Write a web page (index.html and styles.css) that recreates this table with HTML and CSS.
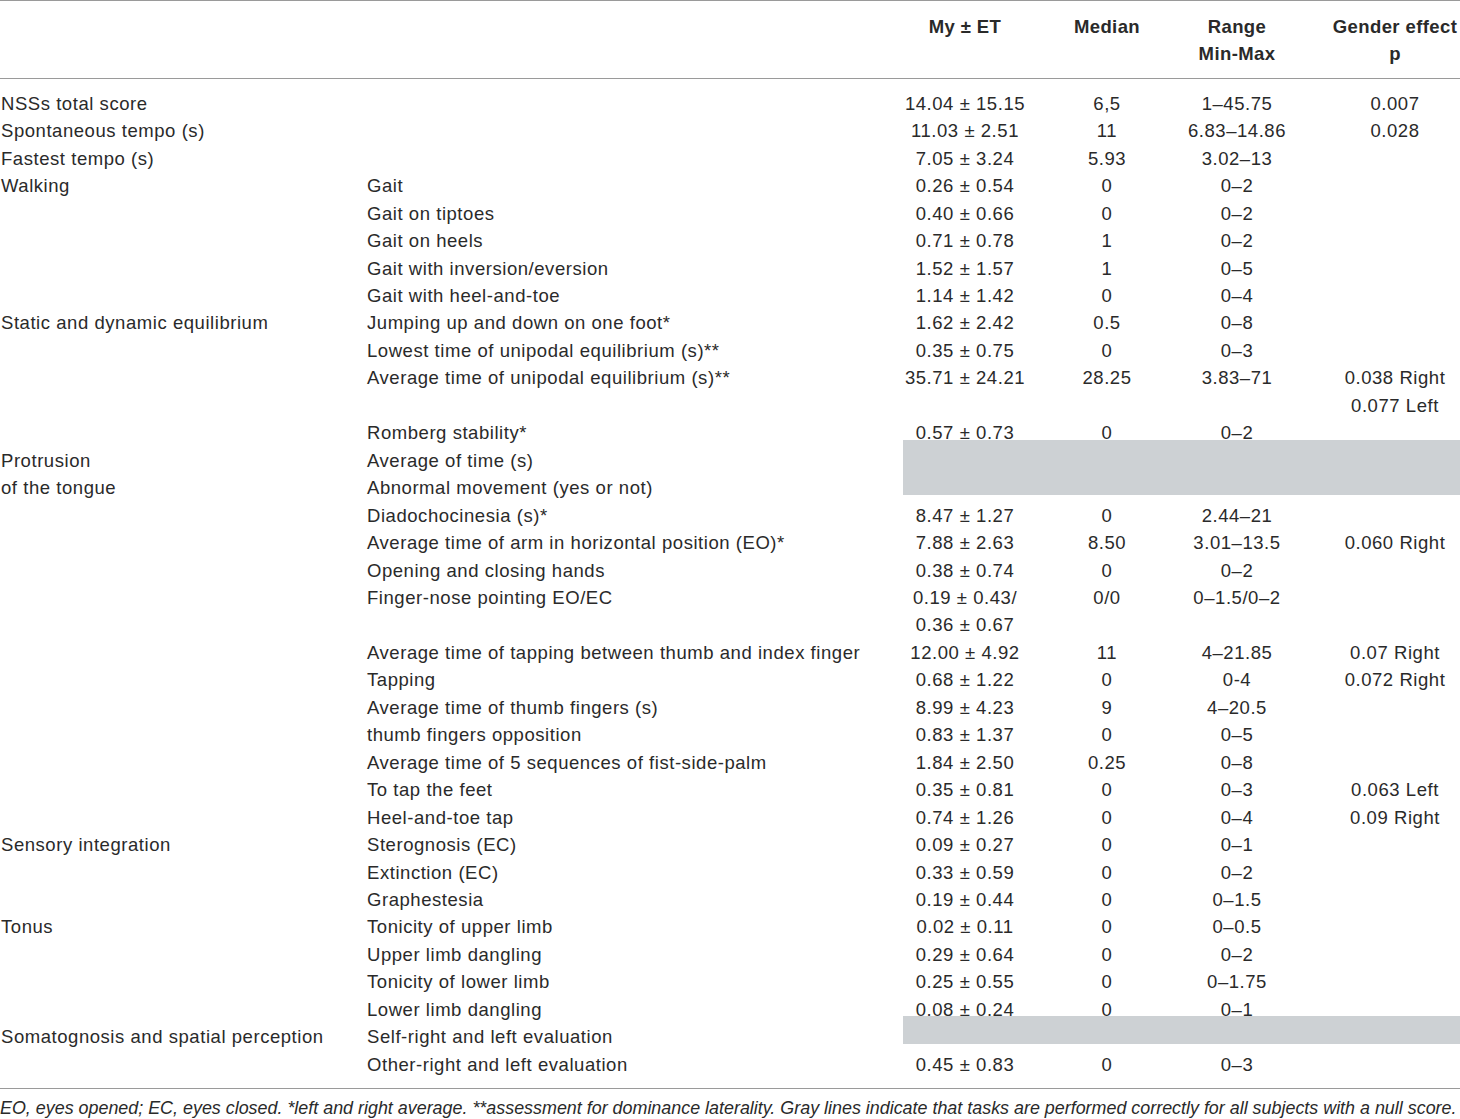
FILE: index.html
```html
<!DOCTYPE html>
<html>
<head>
<meta charset="utf-8">
<link rel="stylesheet" href="styles.css">
</head>
<body>
<div class="page">
<table class="nss">
<colgroup>
<col class="c1"><col class="c2"><col class="c3"><col class="c4"><col class="c5"><col class="c6">
</colgroup>
<thead>
<tr><th></th><th></th><th>My ± ET</th><th>Median</th><th>Range<br>Min-Max</th><th class="p">Gender effect<br>p</th></tr>
</thead>
<tbody>
<tr class="first"><td>NSSs total score</td><td></td><td>14.04 ± 15.15</td><td>6,5</td><td>1–45.75</td><td class="p">0.007</td></tr>
<tr><td>Spontaneous tempo (s)</td><td></td><td>11.03 ± 2.51</td><td>11</td><td>6.83–14.86</td><td class="p">0.028</td></tr>
<tr><td>Fastest tempo (s)</td><td></td><td>7.05 ± 3.24</td><td>5.93</td><td>3.02–13</td><td class="p"></td></tr>
<tr><td>Walking</td><td>Gait</td><td>0.26 ± 0.54</td><td>0</td><td>0–2</td><td class="p"></td></tr>
<tr><td></td><td>Gait on tiptoes</td><td>0.40 ± 0.66</td><td>0</td><td>0–2</td><td class="p"></td></tr>
<tr><td></td><td>Gait on heels</td><td>0.71 ± 0.78</td><td>1</td><td>0–2</td><td class="p"></td></tr>
<tr><td></td><td>Gait with inversion/eversion</td><td>1.52 ± 1.57</td><td>1</td><td>0–5</td><td class="p"></td></tr>
<tr><td></td><td>Gait with heel-and-toe</td><td>1.14 ± 1.42</td><td>0</td><td>0–4</td><td class="p"></td></tr>
<tr><td>Static and dynamic equilibrium</td><td>Jumping up and down on one foot*</td><td>1.62 ± 2.42</td><td>0.5</td><td>0–8</td><td class="p"></td></tr>
<tr><td></td><td>Lowest time of unipodal equilibrium (s)**</td><td>0.35 ± 0.75</td><td>0</td><td>0–3</td><td class="p"></td></tr>
<tr><td></td><td>Average time of unipodal equilibrium (s)**</td><td>35.71 ± 24.21</td><td>28.25</td><td>3.83–71</td><td class="p">0.038 Right<br>0.077 Left</td></tr>
<tr><td></td><td>Romberg stability*</td><td>0.57 ± 0.73</td><td>0</td><td>0–2</td><td class="p"></td></tr>
<tr><td>Protrusion</td><td>Average of time (s)</td><td class="gray" colspan="4" rowspan="2"><div class="band"></div></td></tr>
<tr><td>of the tongue</td><td>Abnormal movement (yes or not)</td></tr>
<tr><td></td><td>Diadochocinesia (s)*</td><td>8.47 ± 1.27</td><td>0</td><td>2.44–21</td><td class="p"></td></tr>
<tr><td></td><td>Average time of arm in horizontal position (EO)*</td><td>7.88 ± 2.63</td><td>8.50</td><td>3.01–13.5</td><td class="p">0.060 Right</td></tr>
<tr><td></td><td>Opening and closing hands</td><td>0.38 ± 0.74</td><td>0</td><td>0–2</td><td class="p"></td></tr>
<tr><td></td><td>Finger-nose pointing EO/EC</td><td>0.19 ± 0.43/<br>0.36 ± 0.67</td><td>0/0</td><td>0–1.5/0–2</td><td class="p"></td></tr>
<tr><td></td><td>Average time of tapping between thumb and index finger</td><td>12.00 ± 4.92</td><td>11</td><td>4–21.85</td><td class="p">0.07 Right</td></tr>
<tr><td></td><td>Tapping</td><td>0.68 ± 1.22</td><td>0</td><td>0-4</td><td class="p">0.072 Right</td></tr>
<tr><td></td><td>Average time of thumb fingers (s)</td><td>8.99 ± 4.23</td><td>9</td><td>4–20.5</td><td class="p"></td></tr>
<tr><td></td><td>thumb fingers opposition</td><td>0.83 ± 1.37</td><td>0</td><td>0–5</td><td class="p"></td></tr>
<tr><td></td><td>Average time of 5 sequences of fist-side-palm</td><td>1.84 ± 2.50</td><td>0.25</td><td>0–8</td><td class="p"></td></tr>
<tr><td></td><td>To tap the feet</td><td>0.35 ± 0.81</td><td>0</td><td>0–3</td><td class="p">0.063 Left</td></tr>
<tr><td></td><td>Heel-and-toe tap</td><td>0.74 ± 1.26</td><td>0</td><td>0–4</td><td class="p">0.09 Right</td></tr>
<tr><td>Sensory integration</td><td>Sterognosis (EC)</td><td>0.09 ± 0.27</td><td>0</td><td>0–1</td><td class="p"></td></tr>
<tr><td></td><td>Extinction (EC)</td><td>0.33 ± 0.59</td><td>0</td><td>0–2</td><td class="p"></td></tr>
<tr><td></td><td>Graphestesia</td><td>0.19 ± 0.44</td><td>0</td><td>0–1.5</td><td class="p"></td></tr>
<tr><td>Tonus</td><td>Tonicity of upper limb</td><td>0.02 ± 0.11</td><td>0</td><td>0–0.5</td><td class="p"></td></tr>
<tr><td></td><td>Upper limb dangling</td><td>0.29 ± 0.64</td><td>0</td><td>0–2</td><td class="p"></td></tr>
<tr><td></td><td>Tonicity of lower limb</td><td>0.25 ± 0.55</td><td>0</td><td>0–1.75</td><td class="p"></td></tr>
<tr><td></td><td>Lower limb dangling</td><td>0.08 ± 0.24</td><td>0</td><td>0–1</td><td class="p"></td></tr>
<tr><td>Somatognosis and spatial perception</td><td>Self-right and left evaluation</td><td class="gray" colspan="4"><div class="band"></div></td></tr>
<tr class="last"><td></td><td>Other-right and left evaluation</td><td>0.45 ± 0.83</td><td>0</td><td>0–3</td><td class="p"></td></tr>
</tbody>
</table>
<p class="foot">EO, eyes opened; EC, eyes closed. *left and right average. **assessment for dominance laterality. Gray lines indicate that tasks are performed correctly for all subjects with a null score.</p>
</div>
</body>
</html>
```

FILE: styles.css
```css
html, body {
  margin: 0;
  padding: 0;
  background: #fff;
}
.page {
  width: 1460px;
  font-family: "Liberation Sans", Arial, sans-serif;
  color: #2a2a2a;
  font-size: 18.5px;
  letter-spacing: 0.55px;
}
.nss {
  width: 1460px;
  border-collapse: collapse;
  table-layout: fixed;
  border-top: 1px solid #9a9a9a;
  border-bottom: 1px solid #9a9a9a;
}
.c1 { width: 367px; }
.c2 { width: 536px; }
.c3 { width: 124px; }
.c4 { width: 160px; }
.c5 { width: 100px; }
.c6 { width: 173px; }
.nss th {
  font-weight: bold;
  letter-spacing: 0.4px;
  line-height: 27.4px;
  padding: 12px 0 10px;
  text-align: center;
  vertical-align: top;
  white-space: nowrap;
  border-bottom: 1px solid #9a9a9a;
}
.nss .p {
  padding-left: 43px;
}
.nss td {
  padding: 0;
  line-height: 27.46px;
  vertical-align: top;
  white-space: nowrap;
  text-align: center;
}
.nss td:first-child, .nss td:nth-child(2) {
  text-align: left;
}
.nss td:first-child {
  padding-left: 1px;
}
.nss tr.first td {
  padding-top: 11px;
}
.nss tr.last td {
  padding-bottom: 10px;
}
.nss td.gray {
  padding: 0;
  position: relative;
}
.band {
  position: absolute;
  left: 0;
  right: 0;
  top: -7px;
  bottom: 7px;
  background: #cdd1d4;
}
.foot {
  margin: 0;
  padding-top: 8px;
  font-style: italic;
  font-size: 17.9px;
  letter-spacing: 0;
  line-height: 22px;
  white-space: nowrap;
}
```
